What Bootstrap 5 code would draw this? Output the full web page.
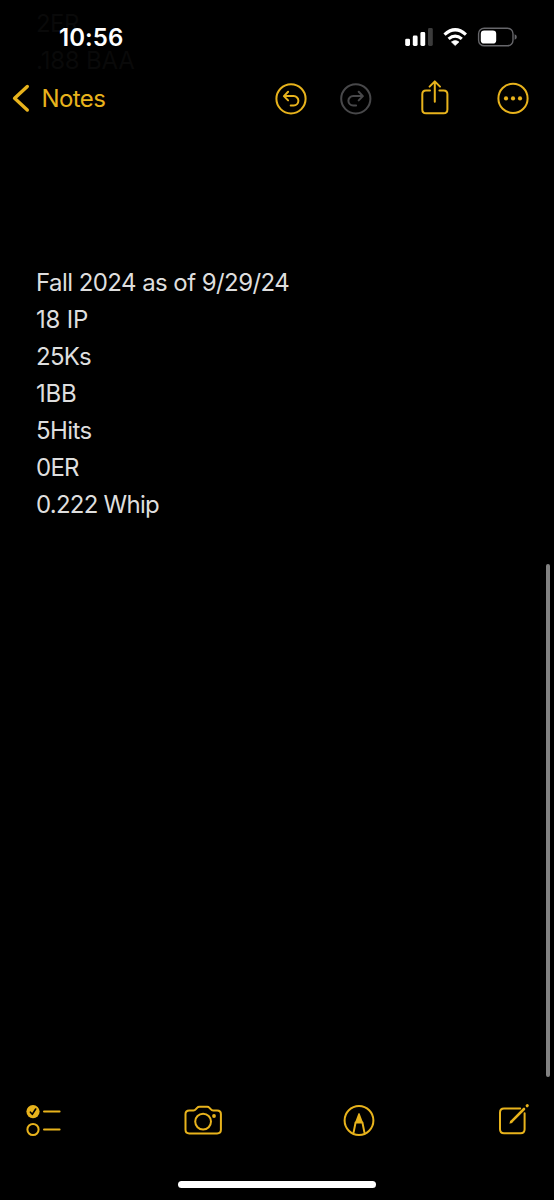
<!DOCTYPE html>
<html lang="en">
<head>
<meta charset="utf-8">
<meta name="viewport" content="width=device-width, initial-scale=1">
<title>Notes</title>
<link href="https://cdn.jsdelivr.net/npm/bootstrap@5.3.0/dist/css/bootstrap.min.css" rel="stylesheet">
<style>
  body { background: #000; color: #dedede; font-family: Inter, "Liberation Sans", sans-serif; overflow: hidden; }
  .phone { width: 554px; height: 1200px; background: #000; }
  svg { display: block; flex: none; }
  .gold { color: #e8b31c; }
  .icon { fill: none; stroke: #e8b31c; stroke-width: 2; stroke-linecap: round; stroke-linejoin: round; }
  .icon .solid { fill: #e8b31c; stroke: none; }
  .muted { stroke: #48484a; }
  .status { height: 74px; padding: 0 36px 0 59px; }
  .clock { font-size: 24px; font-weight: 600; color: #fff; line-height: 74px; padding-top: 1px; letter-spacing: .05px; }
  .topbar { height: 50px; padding: 0 25px 0 12px; }
  .back { font-size: 24px; letter-spacing: -.6px; line-height: 50px; text-decoration: none; }
  .back span { margin-left: 11.5px; }
  .under { left: 36px; top: 5px; color: #090909; z-index: 0; }
  .line { font-size: 24px; line-height: 37px; height: 37px; white-space: pre; letter-spacing: -.56px; }
  .line.tight { letter-spacing: -.75px; }
  .line.loose { letter-spacing: -.2px; }
  .note { padding: 140px 36px 0; }
  .tools { height: 50px; padding: 0 24px 0 25px; margin-bottom: 36px; }
  .home { width: 198px; height: 7px; background: #fff; margin-bottom: 12px; }
  .scroll { right: 4px; top: 564px; width: 4px; height: 513px; background: #828282; }
</style>
</head>
<body>
<div class="phone position-relative d-flex flex-column">
  <div class="under position-absolute" aria-hidden="true">
    <div class="line">2ER</div>
    <div class="line loose">.188 BAA</div>
  </div>

  <header class="position-relative">
    <div class="status d-flex align-items-center justify-content-between">
      <div class="clock">10:56</div>
      <svg width="114" height="24" viewBox="404 25 114 24">
        <g fill="#fff">
          <rect x="405.2" y="38.7" width="4.8" height="7.3" rx="1.4"/>
          <rect x="412.8" y="35.6" width="4.8" height="10.4" rx="1.4"/>
          <rect x="420.4" y="32" width="4.8" height="14" rx="1.4"/>
          <rect x="428" y="28" width="4.8" height="18" rx="1.4" fill="#3b3b3b"/>
          <path d="M455.2 45.6 L451.4 41.9 Q455.2 39 459 41.9 Z" stroke="#fff" stroke-width=".6" stroke-linejoin="round"/>
        </g>
        <g fill="none" stroke="#fff" stroke-width="3.2">
          <path d="M448.6 38.9 Q455.2 33.3 461.8 38.9"/>
          <path d="M444.5 34.6 Q455.2 24.9 465.9 34.6"/>
        </g>
        <rect x="478.6" y="28.2" width="34.4" height="17.6" rx="5.6" fill="none" stroke="#66666a" stroke-width="1.4"/>
        <rect x="480.8" y="30.4" width="15.4" height="13.2" rx="3.4" fill="#fff"/>
        <path d="M514.6 34.2 Q516.8 35 516.8 37 Q516.8 39 514.6 39.8 Z" fill="#66666a"/>
      </svg>
    </div>

    <nav class="topbar d-flex align-items-center justify-content-between">
      <a href="#" class="back gold d-flex align-items-center">
        <svg width="18" height="30" viewBox="12 84 18 30" class="icon" style="stroke-width:3.4"><path d="M27.3 86.5 L14.6 98.3 L27.3 110"/></svg>
        <span>Notes</span>
      </a>
      <div class="d-flex align-items-center">
        <svg width="34" height="36" viewBox="273.5 81 34 36" class="icon">
          <circle cx="290.5" cy="98.8" r="14.6"/>
          <path d="M287.6 91.8 L283.4 96.1 L287.6 100.4 M283.8 96.1 H293.2 A4.7 4.7 0 0 1 293.2 105.5 H290.2"/>
        </svg>
        <svg width="34" height="36" viewBox="338.5 81 34 36" class="icon muted" style="margin-left:31px">
          <circle cx="355.3" cy="98.8" r="14.6"/>
          <path d="M358.2 91.8 L362.4 96.1 L358.2 100.4 M362 96.1 H352.6 A4.7 4.7 0 0 0 352.6 105.5 H355.6"/>
        </svg>
        <svg width="32" height="38" viewBox="419 80 32 38" class="icon" style="margin-left:46.5px">
          <path d="M430 90.6 H426 Q422.3 90.6 422.3 94.3 V109.4 Q422.3 113.2 426 113.2 H443.6 Q447.4 113.2 447.4 109.4 V94.3 Q447.4 90.6 443.6 90.6 H439.4"/>
          <path d="M434.8 101.8 V81.6 M429.6 86.6 L434.8 81.4 L440 86.6"/>
        </svg>
        <svg width="34" height="36" viewBox="496 81 34 36" class="icon" style="margin-left:45px;margin-right:-1px">
          <circle cx="513" cy="98.4" r="14.6"/>
          <g class="solid"><circle cx="506" cy="98.4" r="2.1"/><circle cx="513" cy="98.4" r="2.1"/><circle cx="520" cy="98.4" r="2.1"/></g>
        </svg>
      </div>
    </nav>
  </header>

  <main class="note flex-grow-1">
    <div class="line">Fall 2024 as of 9/29/24</div>
    <div class="line loose">18 IP</div>
    <div class="line tight">25Ks</div>
    <div class="line loose">1BB</div>
    <div class="line">5Hits</div>
    <div class="line tight">0ER</div>
    <div class="line tight">0.222 Whip</div>
  </main>

  <div class="scroll position-absolute rounded-pill"></div>

  <footer>
    <div class="tools d-flex align-items-center justify-content-between">
      <svg width="38" height="36" viewBox="25 1102 38 36" class="icon">
        <circle cx="33" cy="1111.6" r="6.6" class="solid"/>
        <path d="M30.4 1112.2 L32.3 1114.3 L35.7 1109" style="stroke:#000;stroke-width:1.6"/>
        <circle cx="33" cy="1129.5" r="5.6"/>
        <path d="M44 1111.6 H59.6 M44 1129.4 H59.6"/>
      </svg>
      <svg width="40" height="36" viewBox="182.5 1102 40 36" class="icon">
        <path d="M188.8 1110.4 H193 Q194.4 1110.4 195.4 1109.2 L196.6 1107.8 Q197.5 1106.8 199 1106.8 H206.6 Q208.1 1106.8 209 1107.8 L210.2 1109.2 Q211.2 1110.4 212.6 1110.4 H216.6 Q220.4 1110.4 220.4 1114 V1129.8 Q220.4 1133.4 216.6 1133.4 H188.8 Q185 1133.4 185 1129.8 V1114 Q185 1110.4 188.8 1110.4 Z"/>
        <circle cx="202.6" cy="1121.6" r="7.9"/>
        <circle cx="213.5" cy="1116" r="1.9" class="solid"/>
      </svg>
      <svg width="34" height="36" viewBox="342 1102 34 36" class="icon">
        <circle cx="359" cy="1120.5" r="14.4"/>
        <path d="M353.6 1132.4 L355.6 1122.4 H362.4 L364.4 1132.4"/>
        <path class="solid" d="M354.8 1123 L358.3 1113.8 Q359 1112.4 359.7 1113.8 L363.2 1123 Z"/>
      </svg>
      <svg width="34" height="36" viewBox="496 1102 34 36" class="icon">
        <path d="M520.2 1108.4 H504 Q500 1108.4 500 1112.4 V1129.2 Q500 1133.2 504 1133.2 H520.6 Q524.6 1133.2 524.6 1129.2 V1113.2"/>
        <path d="M511.2 1121.8 L524 1109" stroke-width="2.6"/>
        <path class="solid" d="M509.4 1123.8 L510.4 1120.6 L512.6 1122.8 Z"/>
        <path d="M527.1 1105.8 L527.3 1105.6" style="stroke-width:3"/>
      </svg>
    </div>
    <div class="home rounded-pill mx-auto"></div>
  </footer>
</div>
<script src="https://cdn.jsdelivr.net/npm/bootstrap@5.3.0/dist/js/bootstrap.bundle.min.js"></script>
</body>
</html>
